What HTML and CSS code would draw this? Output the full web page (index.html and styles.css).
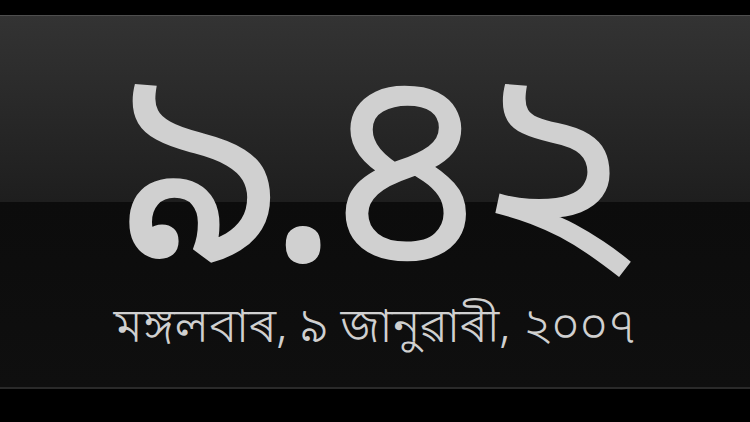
FILE: index.html
```
<!DOCTYPE html>
<html lang="as">
<head>
<meta charset="utf-8">
<link rel="stylesheet" href="styles.css">
</head>
<body>
<div class="panel">
  <div class="time">৯.৪২</div>
  <div class="date">মঙ্গলবাৰ, ৯ জানুৱাৰী, ২০০৭</div>
</div>
</body>
</html>
```
FILE: styles.css
```
html, body {
  margin: 0;
  padding: 0;
  background: #000;
  width: 750px;
  height: 422px;
  overflow: hidden;
}
.panel {
  margin-top: 15px;
  height: 371px;
  border-top: 1px solid #4e4e4e;
  border-bottom: 2px solid #2a2a2a;
  background: linear-gradient(to bottom, #333333 0px, #1e1e1e 186px, #0c0c0c 186px, #0f0f0f 100%);
  display: flex;
  flex-direction: column;
  align-items: center;
  color: #d0d0d0;
  font-family: "Noto Sans Bengali", "Noto Sans", "Lohit Bengali", sans-serif;
}
.time {
  font-size: 280px;
  line-height: 240px;
  letter-spacing: -18px;
  margin-top: 53px;
  margin-left: -14px;
}
.date {
  font-size: 48px;
  line-height: 36px;
  font-weight: 300;
  margin-top: 3px;
}
```
